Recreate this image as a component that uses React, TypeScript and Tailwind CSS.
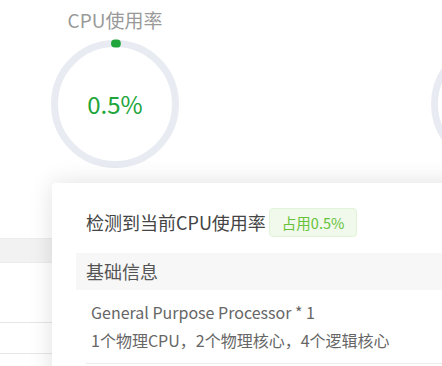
import React from 'react';

const Ring: React.FC<{ percent: number; showLabel?: boolean }> = ({ percent, showLabel = true }) => {
  const r = 60.5;
  const c = 2 * Math.PI * r;
  const len = Math.max((percent / 100) * c, 0.01);
  return (
    <div className="relative w-[130px] h-[130px]">
      <svg width="130" height="130" viewBox="0 0 130 130" className="absolute inset-0">
        <circle cx="65" cy="65" r={r} fill="none" stroke="#e8ebf2" strokeWidth="7" />
        <circle
          cx="65"
          cy="65"
          r={r}
          fill="none"
          stroke="#20a53a"
          strokeWidth="8"
          strokeLinecap="round"
          strokeDasharray={`${len} ${c}`}
          transform="rotate(-90 65 65)"
        />
      </svg>
      {showLabel && (
        <div className="absolute inset-0 flex items-center justify-center text-[24px] text-[#20a53a]">
          {percent}%
        </div>
      )}
    </div>
  );
};

const App: React.FC = () => {
  return (
    <div
      className="relative w-[442px] h-[366px] overflow-hidden bg-white"
      style={{ fontFamily: '"Noto Sans CJK SC", "Noto Sans", sans-serif' }}
    >
      {/* Gauges */}
      <div className="flex gap-[250px] pl-[50px] pt-[6px]">
        <div className="flex flex-col items-center shrink-0">
          <div className="h-[28px] leading-[28px] text-[19px] text-[#999] mb-[5px]">CPU使用率</div>
          <Ring percent={0.5} />
        </div>
        <div className="flex flex-col items-center shrink-0">
          <div className="h-[28px] mb-[5px]" />
          <Ring percent={0} showLabel={false} />
        </div>
      </div>

      {/* Table behind */}
      <div className="mt-[69px]">
        <div className="h-[25px] bg-[#f2f2f2] border-y border-[#ececec]" />
        <div className="h-[60px] border-b border-[#e6e6e6]" />
        <div className="h-[31px] border-b border-[#e6e6e6]" />
      </div>

      {/* Popover */}
      <div className="absolute left-[52px] top-[183px] w-[430px] h-[220px] bg-white rounded-[4px] shadow-[0_0_24px_rgba(0,0,0,0.12)] pt-[25px] pl-[24px]">
        <div className="flex items-center pl-[10px]">
          <span className="text-[18px] text-[#444]">检测到当前CPU使用率</span>
          <span className="ml-[3px] h-[29px] px-[12px] flex items-center rounded-[4px] border border-[#e1f3d8] bg-[#f0f9eb] text-[14.5px] text-[#67c23a]">
            占用0.5%
          </span>
        </div>
        <div className="mt-[16px] h-[37px] bg-[#f7f7f7] px-[10px] flex items-center text-[18px] text-[#555]">
          基础信息
        </div>
        <div className="ml-[10px] pl-[5px] pt-[8px] pb-[9px] border-b border-[#ebebeb] text-[16px] leading-[28px] text-[#666]">
          <div>General Purpose Processor * 1</div>
          <div>1个物理CPU，2个物理核心，4个逻辑核心</div>
        </div>
      </div>
    </div>
  );
};

export default App;
